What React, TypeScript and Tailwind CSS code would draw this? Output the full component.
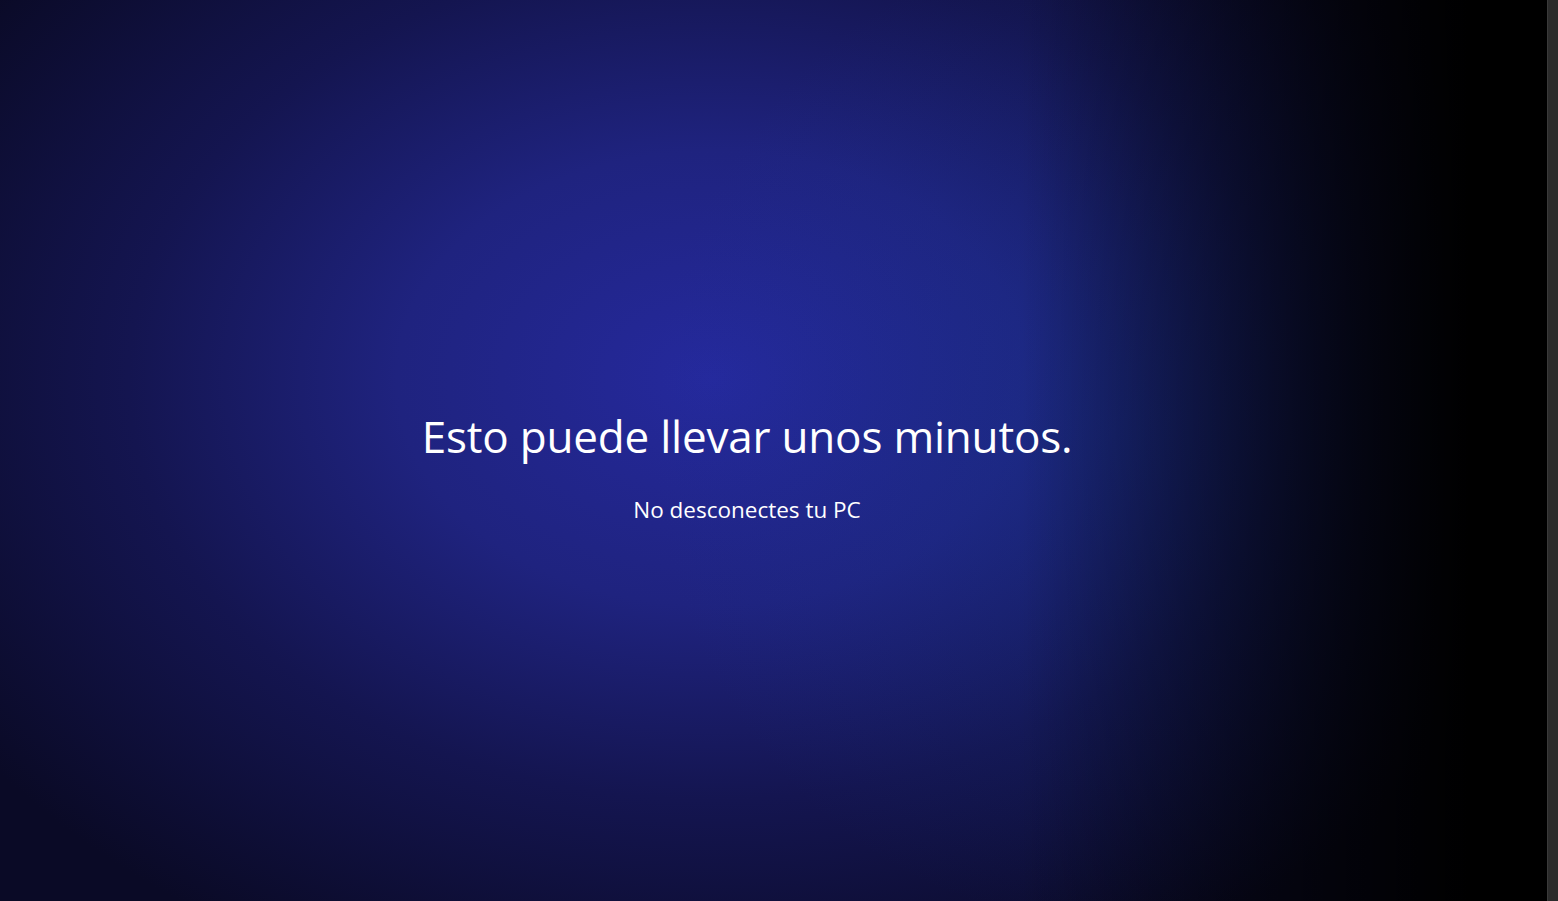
import React from 'react';

// Pantalla de actualización: fondo azul con degradado radial y dos líneas de texto
export default function App() {
  return (
    <div className="flex h-[901px] w-full overflow-hidden bg-black">
      <div className="relative flex flex-1 items-center justify-center bg-[radial-gradient(ellipse_58%_72%_at_46%_42%,#25299d_0%,#1f237f_35%,#141550_65%,#0a0a26_100%)]">
        <div className="pointer-events-none absolute inset-0 bg-[radial-gradient(ellipse_30%_55%_at_72%_48%,rgba(20,60,150,0.3)_0%,rgba(20,60,150,0.12)_55%,rgba(20,60,150,0)_100%)]" />
        <div className="pointer-events-none absolute inset-0 bg-[linear-gradient(to_right,rgba(0,0,0,0)_0%,rgba(0,0,0,0)_66%,rgba(0,0,0,0.75)_87%,#000_95%)]" />
        <div className="relative flex flex-col items-center pr-[53px] pt-[34px] text-white font-['Open_Sans',sans-serif]">
          <h1 className="text-[44px] font-normal leading-none tracking-[-0.2px]">Esto puede llevar unos minutos.</h1>
          <p className="mt-[41px] text-[22.5px] leading-none">No desconectes tu PC</p>
        </div>
      </div>
      <div className="w-[11px] shrink-0 border-l border-[#3a3a3a] bg-[#2b2b2b]" />
    </div>
  );
}
